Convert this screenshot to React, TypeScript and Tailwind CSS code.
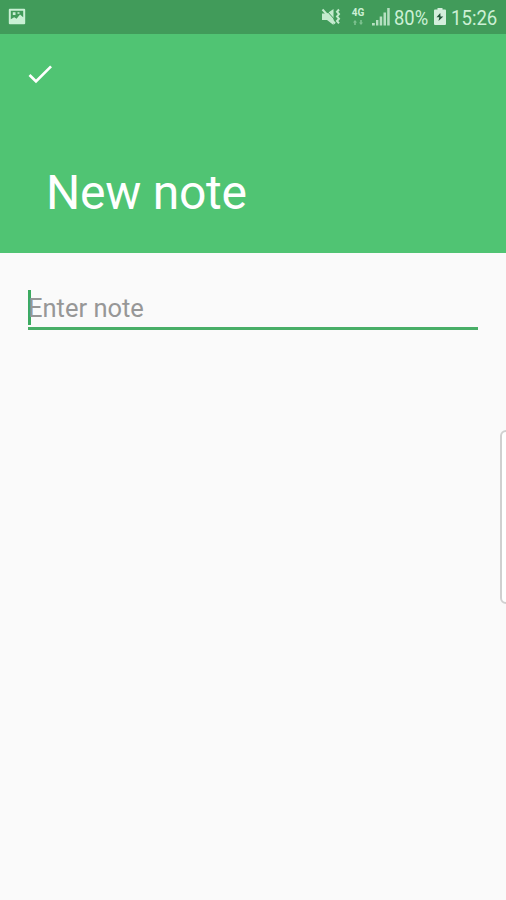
function PictureIcon() {
  return (
    <svg className="ml-2 h-[18px] w-[18px]" viewBox="0 0 18 18">
      <path
        fillRule="evenodd"
        fill="#c9f0d4"
        d="M1.8 .8h14.4q1 0 1 1v13.4q0 1-1 1H1.8q-1 0-1-1V1.8q0-1 1-1ZM2.8 2.8v8.5l3.4-2 2.4 1.4L12 6.5l3.2 2.8V2.8ZM4.8 4.3h2.7v2.7H4.8ZM9.5 4.3h2v1.5h-2Z"
      />
    </svg>
  );
}

function MutedIcon() {
  return (
    <svg className="h-[18px] w-5" viewBox="0 0 20 18" fill="none">
      <path d="M1 5.5h5L12.5 1v16L6 12H1Z" fill="#c4ebce" />
      <path d="m5.5 2.5 9 10" stroke="#419b5a" strokeWidth="1" />
      <path d="m1.5 1.5 12.5 14" stroke="#c4ebce" strokeWidth="2" />
      <path d="m18 1.5-2 2.3 2 2.3-2 2.3 2 2.3-2 2.3 2 2.3" stroke="#c4ebce" strokeWidth="2" />
    </svg>
  );
}

function NetworkIcon() {
  return (
    <div className="flex h-[18px] w-4 flex-col items-center">
      <span className="text-[10px] leading-[10px] font-bold">4G</span>
      <svg className="mt-0.5 h-[6px] w-[10px]" viewBox="0 0 10 6" fill="#7fc391">
        <path d="M0 2.5 2 0l2 2.5H2.8V5H1.2V2.5ZM6 2.5h1.2V0h1.6v2.5H10L8 5Z" />
      </svg>
    </div>
  );
}

function SignalIcon() {
  return (
    <svg className="h-[18px] w-[18px]" viewBox="0 0 18 18" fill="#b5dfc0">
      <path d="M0 15h2.8v2.5H0ZM4 12h2.4v5.5H4ZM7.7 8.5h2.5v9H7.7ZM11.5 4.5H14v13h-2.5ZM15.2 0h2.5v17.5h-2.5Z" />
    </svg>
  );
}

function BatteryIcon() {
  return (
    <svg className="h-[18px] w-3" viewBox="0 0 12 18">
      <path d="M3.5 0h5v1.5H11q1 0 1 1V16q0 1-1 1H1q-1 0-1-1V2.5q0-1 1-1h2.5Z" fill="#d4eedc" />
      <path d="M6.3 5 2.5 9.3h2.8l-.8 3.7 4.8-4.5H6.5Z" fill="#24553a" />
    </svg>
  );
}

function StatusBar() {
  return (
    <div className="flex h-[34px] items-center bg-[#419b5a] text-[#ccf0d5]">
      <PictureIcon />
      <div className="ml-auto flex items-center">
        <MutedIcon />
        <div className="ml-[9px]">
          <NetworkIcon />
        </div>
        <div className="ml-[6px]">
          <SignalIcon />
        </div>
        <div className="ml-[4px] w-[35px] pt-px text-xl leading-[34px]">
          <span className="inline-block origin-left scale-x-[.92] whitespace-nowrap">80%</span>
        </div>
        <div className="ml-[5px]">
          <BatteryIcon />
        </div>
        <div className="ml-[5px] w-[55px] pt-px text-xl leading-[34px]">
          <span className="inline-block origin-left scale-x-[.93] whitespace-nowrap">15:26</span>
        </div>
      </div>
    </div>
  );
}

export default function App() {
  return (
    <div className="h-[900px] w-[506px] overflow-hidden bg-[#fafafa] font-['Roboto',sans-serif]">
      <StatusBar />
      <header className="h-[219px] bg-[#50c473] pt-[24px] text-white">
        <button type="button" aria-label="Save note" className="ml-6 block h-8 w-8">
          <svg viewBox="0 0 24 24" className="h-8 w-8" fill="currentColor">
            <path d="M9 16.17 4.83 12l-1.42 1.41L9 19 21 7l-1.41-1.41z" />
          </svg>
        </button>
        <h1 className="mt-[75px] ml-[46px] text-[48px] leading-[56px] tracking-[-0.25px]">New note</h1>
      </header>
      <main className="relative h-[647px]">
        <div className="pt-[37px] pr-[28px] pl-[28px]">
          <div className="flex h-[40px] items-start border-b-[3px] border-[#48ae67]">
            <span className="h-[35px] w-[3px] bg-[#3caa60]" />
            <span className="-ml-[3px] text-[25.5px] leading-9 text-[#979797]">Enter note</span>
          </div>
        </div>
        {/* edge panel handle */}
        <div className="absolute top-[177px] right-[-6px] h-[174px] w-3 rounded-lg border-2 border-[#d0d0d0] bg-white" />
      </main>
    </div>
  );
}
